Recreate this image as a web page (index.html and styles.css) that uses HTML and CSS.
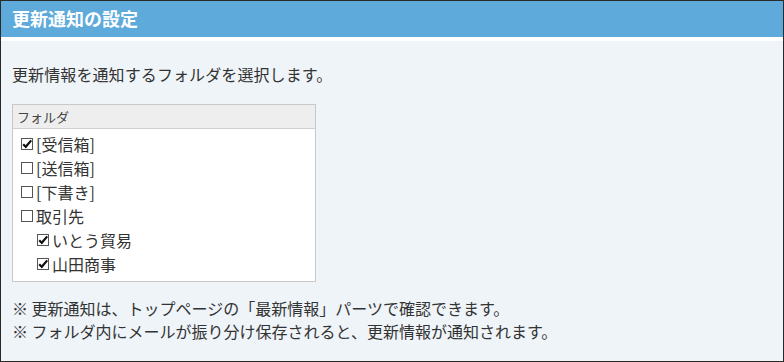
FILE: index.html
```html
<!DOCTYPE html>
<html lang="ja">
<head>
<meta charset="utf-8">
<title>更新通知の設定</title>
<link rel="stylesheet" href="styles.css">
</head>
<body>
<div class="frame">
  <div class="header">更新通知の設定</div>
  <div class="content">
    <p class="intro">更新情報を通知するフォルダを選択します。</p>
    <div class="folders">
      <div class="folders-head">フォルダ</div>
      <ul class="folder-list">
        <li class="row"><span class="cb on"><svg viewBox="0 0 12 12" width="12" height="12"><rect x="0.5" y="0.5" width="11" height="11" fill="#fff" stroke="#555"/><path d="M2.2 6.2 L4.8 8.8 L10.2 2.4" fill="none" stroke="#111" stroke-width="2.2"/></svg></span>[受信箱]</li>
        <li class="row"><span class="cb"><svg viewBox="0 0 12 12" width="12" height="12"><rect x="0.5" y="0.5" width="11" height="11" fill="#fff" stroke="#555"/></svg></span>[送信箱]</li>
        <li class="row"><span class="cb"><svg viewBox="0 0 12 12" width="12" height="12"><rect x="0.5" y="0.5" width="11" height="11" fill="#fff" stroke="#555"/></svg></span>[下書き]</li>
        <li class="row"><span class="cb"><svg viewBox="0 0 12 12" width="12" height="12"><rect x="0.5" y="0.5" width="11" height="11" fill="#fff" stroke="#555"/></svg></span>取引先</li>
        <li class="row sub"><span class="cb on"><svg viewBox="0 0 12 12" width="12" height="12"><rect x="0.5" y="0.5" width="11" height="11" fill="#fff" stroke="#555"/><path d="M2.2 6.2 L4.8 8.8 L10.2 2.4" fill="none" stroke="#111" stroke-width="2.2"/></svg></span>いとう貿易</li>
        <li class="row sub"><span class="cb on"><svg viewBox="0 0 12 12" width="12" height="12"><rect x="0.5" y="0.5" width="11" height="11" fill="#fff" stroke="#555"/><path d="M2.2 6.2 L4.8 8.8 L10.2 2.4" fill="none" stroke="#111" stroke-width="2.2"/></svg></span>山田商事</li>
      </ul>
    </div>
    <div class="notes">
      <p class="note">※ 更新通知は、トップページの「最新情報」パーツで確認できます。</p>
      <p class="note">※ フォルダ内にメールが振り分け保存されると、更新情報が通知されます。</p>
    </div>
  </div>
</div>
</body>
</html>
```

FILE: styles.css
```css
* { box-sizing: border-box; }
html, body { margin: 0; padding: 0; }
body {
  font-family: "Noto Sans CJK JP", "Noto Sans", sans-serif;
  color: #333;
  background: #fff;
}
.frame {
  width: 784px;
  height: 362px;
  border: 1px solid #2a2a2a;
  background: #eff4f8;
  display: flex;
  flex-direction: column;
}
.header {
  height: 40px;
  background: #5eaadb;
  border-bottom: 4px solid #fff;
  color: #fff;
  font-weight: bold;
  font-size: 18px;
  line-height: 34px;
  padding-left: 11px;
}
.content {
  padding: 21px 11px 0 11px;
}
.intro {
  margin: 0;
  font-size: 16px;
  line-height: 24px;
  letter-spacing: 0.1px;
}
.folders {
  margin-top: 18px;
  width: 304px;
  border: 1px solid #c8c8c8;
  background: #fff;
}
.folders-head {
  height: 24px;
  background: #eeeeee;
  border-bottom: 1px solid #d0d0d0;
  font-size: 13px;
  line-height: 23px;
  padding-left: 4px;
  color: #444;
}
.folder-list {
  list-style: none;
  margin: 0;
  padding: 3px 0 5px 8px;
}
.row {
  display: flex;
  align-items: center;
  height: 24px;
  font-size: 16px;
  line-height: 24px;
}
.row.sub { padding-left: 16px; }
.cb {
  display: inline-flex;
  width: 12px;
  height: 12px;
  margin-right: 3px;
  flex: none;
}
.cb svg { display: block; }
.notes {
  margin-top: 15px;
}
.note {
  margin: 0;
  font-size: 16px;
  line-height: 23px;
}
```
